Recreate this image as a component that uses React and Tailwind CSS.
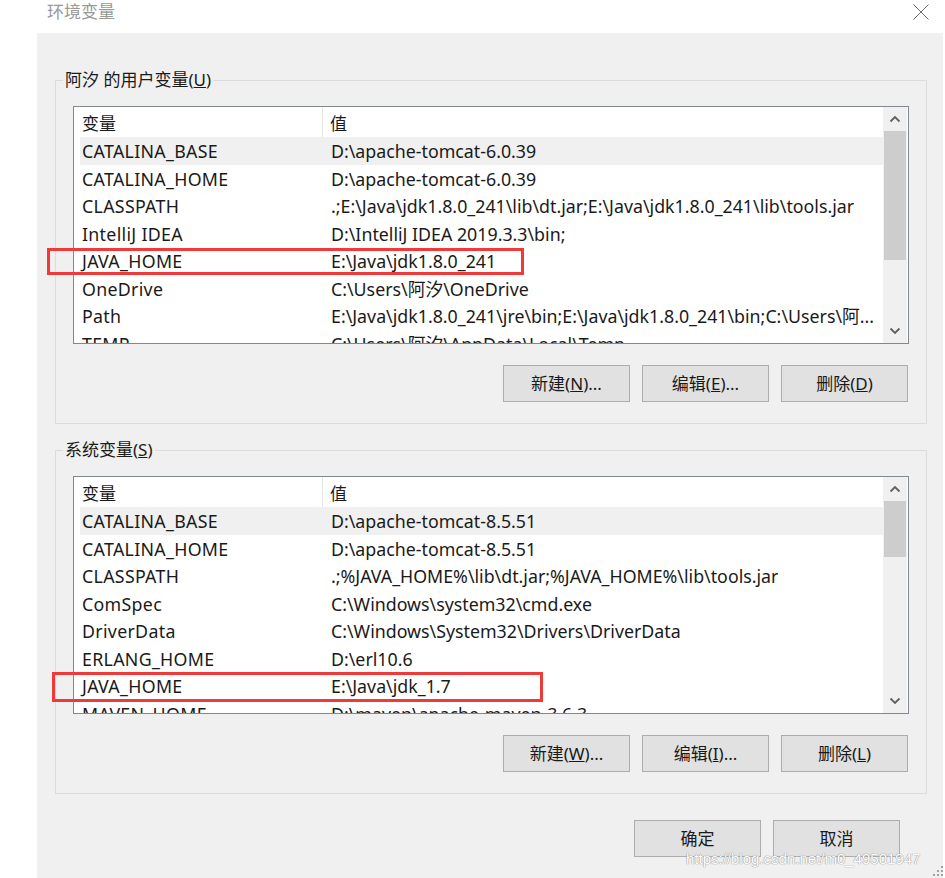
import React from 'react';

const FONT = { fontFamily: '"Noto Sans", "Noto Sans CJK SC", sans-serif' };

const userVars = [
  ['CATALINA_BASE', 'D:\\apache-tomcat-6.0.39'],
  ['CATALINA_HOME', 'D:\\apache-tomcat-6.0.39'],
  ['CLASSPATH', '.;E:\\Java\\jdk1.8.0_241\\lib\\dt.jar;E:\\Java\\jdk1.8.0_241\\lib\\tools.jar'],
  ['IntelliJ IDEA', 'D:\\IntelliJ IDEA 2019.3.3\\bin;'],
  ['JAVA_HOME', 'E:\\Java\\jdk1.8.0_241'],
  ['OneDrive', 'C:\\Users\\阿汐\\OneDrive'],
  ['Path', 'E:\\Java\\jdk1.8.0_241\\jre\\bin;E:\\Java\\jdk1.8.0_241\\bin;C:\\Users\\阿...'],
  ['TEMP', 'C:\\Users\\阿汐\\AppData\\Local\\Temp'],
];

const sysVars = [
  ['CATALINA_BASE', 'D:\\apache-tomcat-8.5.51'],
  ['CATALINA_HOME', 'D:\\apache-tomcat-8.5.51'],
  ['CLASSPATH', '.;%JAVA_HOME%\\lib\\dt.jar;%JAVA_HOME%\\lib\\tools.jar'],
  ['ComSpec', 'C:\\Windows\\system32\\cmd.exe'],
  ['DriverData', 'C:\\Windows\\System32\\Drivers\\DriverData'],
  ['ERLANG_HOME', 'D:\\erl10.6'],
  ['JAVA_HOME', 'E:\\Java\\jdk_1.7'],
  ['MAVEN_HOME', 'D:\\maven\\apache-maven-3.6.3'],
];

function Chevron({ up }) {
  return (
    <svg width="12" height="8" viewBox="0 0 12 8">
      <path d={up ? 'M1.5 6.5 L6 2 L10.5 6.5' : 'M1.5 1.5 L6 6 L10.5 1.5'}
        fill="none" stroke="#606060" strokeWidth="1.8" />
    </svg>
  );
}

function VarList({ rows, thumbH }) {
  return (
    <div className="mx-[17px] mt-[16px] h-[238px] min-w-0 border border-[#828790] bg-white flex overflow-hidden">
      <div className="flex-1 min-w-0 flex flex-col overflow-hidden">
        <div className="h-[30px] shrink-0 flex items-center text-[#1a1a1a]">
          <div className="w-[249px] h-full pl-[8px] pt-[3px] flex items-center border-r border-[#e5e5e5]">变量</div>
          <div className="pl-[7px] pt-[3px]">值</div>
        </div>
        {rows.map(([k, v], i) => (
          <div key={k}
            className={`h-[27.5px] shrink-0 ml-[6px] pt-[2px] flex items-center text-[#1a1a1a] text-[17.8px] ${i === 0 ? 'bg-[#f0f0f0]' : ''}`}>
            <div className="w-[243px] shrink-0 pl-[2px] whitespace-nowrap tracking-[0.3px]">{k}</div>
            <div className="pl-[8px] min-w-0 whitespace-nowrap overflow-hidden">{v}</div>
          </div>
        ))}
      </div>
      <div className="w-[24px] shrink-0 bg-[#f0f0f0] flex flex-col mr-[1px]">
        <div className="h-[24px] flex items-center justify-center"><Chevron up /></div>
        <div className="flex-1 flex flex-col px-[1px]">
          <div className="bg-[#cdcdcd]" style={{ height: thumbH }} />
        </div>
        <div className="h-[24px] flex items-center justify-center"><Chevron /></div>
      </div>
    </div>
  );
}

function Btn({ children }) {
  return (
    <div className="w-[127px] h-[37px] border border-[#adadad] bg-[#e1e1e1] flex items-center justify-center pt-[1px] text-[#1a1a1a]">
      {children}
    </div>
  );
}

function Group({ title, rows, thumbH, btns }) {
  return (
    <fieldset className="min-w-0 border border-[#dcdcdc] pb-[21px]">
      <legend className="ml-[7px] px-[2px] leading-[20px] text-[#1a1a1a]">{title}</legend>
      <VarList rows={rows} thumbH={thumbH} />
      <div className="flex justify-end gap-[12px] mt-[21px] mr-[18px]">
        {btns.map((b, i) => <Btn key={i}>{b}</Btn>)}
      </div>
    </fieldset>
  );
}

export default function App() {
  return (
    <div className="w-[945px] h-[878px] bg-white flex flex-col overflow-hidden relative text-[17px]" style={FONT}>
      <div className="h-[33px] shrink-0 flex items-start justify-between pl-[47px] pr-[16px] pt-[1px]">
        <span className="text-[#999999] text-[17px] leading-[22px]">环境变量</span>
        <svg className="mt-[3px]" width="16" height="16" viewBox="0 0 16 16">
          <path d="M0.5 0.5 L15.5 15.5 M15.5 0.5 L0.5 15.5" stroke="#6b6b6b" strokeWidth="1" />
        </svg>
      </div>
      <div className="flex-1 min-w-0 ml-[37px] mr-[2px] bg-[#f0f0f0] pt-[37px] pl-[18px] pr-[16px]">
        <Group
          title={<>阿汐 的用户变量(<span className="underline">U</span>)</>}
          rows={userVars} thumbH={129}
          btns={[
            <>新建(<span className="underline">N</span>)...</>,
            <>编辑(<span className="underline">E</span>)...</>,
            <>删除(<span className="underline">D</span>)</>,
          ]}
        />
        <div className="h-[16px]" />
        <Group
          title={<>系统变量(<span className="underline">S</span>)</>}
          rows={sysVars} thumbH={56}
          btns={[
            <>新建(<span className="underline">W</span>)...</>,
            <>编辑(<span className="underline">I</span>)...</>,
            <>删除(<span className="underline">L</span>)</>,
          ]}
        />
        <div className="flex justify-end gap-[12px] mt-[26px] mr-[27px]">
          <Btn>确定</Btn>
          <Btn>取消</Btn>
        </div>
      </div>

      {/* red highlight boxes */}
      <div className="absolute left-[47px] top-[248px] w-[477px] h-[27px] border-[3px] border-[#f03a3a]" />
      <div className="absolute left-[52px] top-[672px] w-[491px] h-[30px] border-[3px] border-[#f03a3a]" />

      {/* watermark */}
      <div className="absolute left-[686px] top-[848px] text-[15px] text-white [text-shadow:0_0_1px_#8a8a8a,0_0_1px_#8a8a8a]"
        style={{ fontFamily: '"Liberation Sans", Arial, sans-serif' }}>
        https://blog.csdn.net/m0_49501947
      </div>

      {/* resize grip */}
      <svg className="absolute right-[1px] bottom-[1px]" width="12" height="12" viewBox="0 0 12 12">
        {[[9, 1], [9, 5], [5, 5], [9, 9], [5, 9], [1, 9]].map(([x, y], i) => (
          <rect key={i} x={x} y={y} width="2" height="2" fill="#a0a0a0" />
        ))}
      </svg>
    </div>
  );
}
